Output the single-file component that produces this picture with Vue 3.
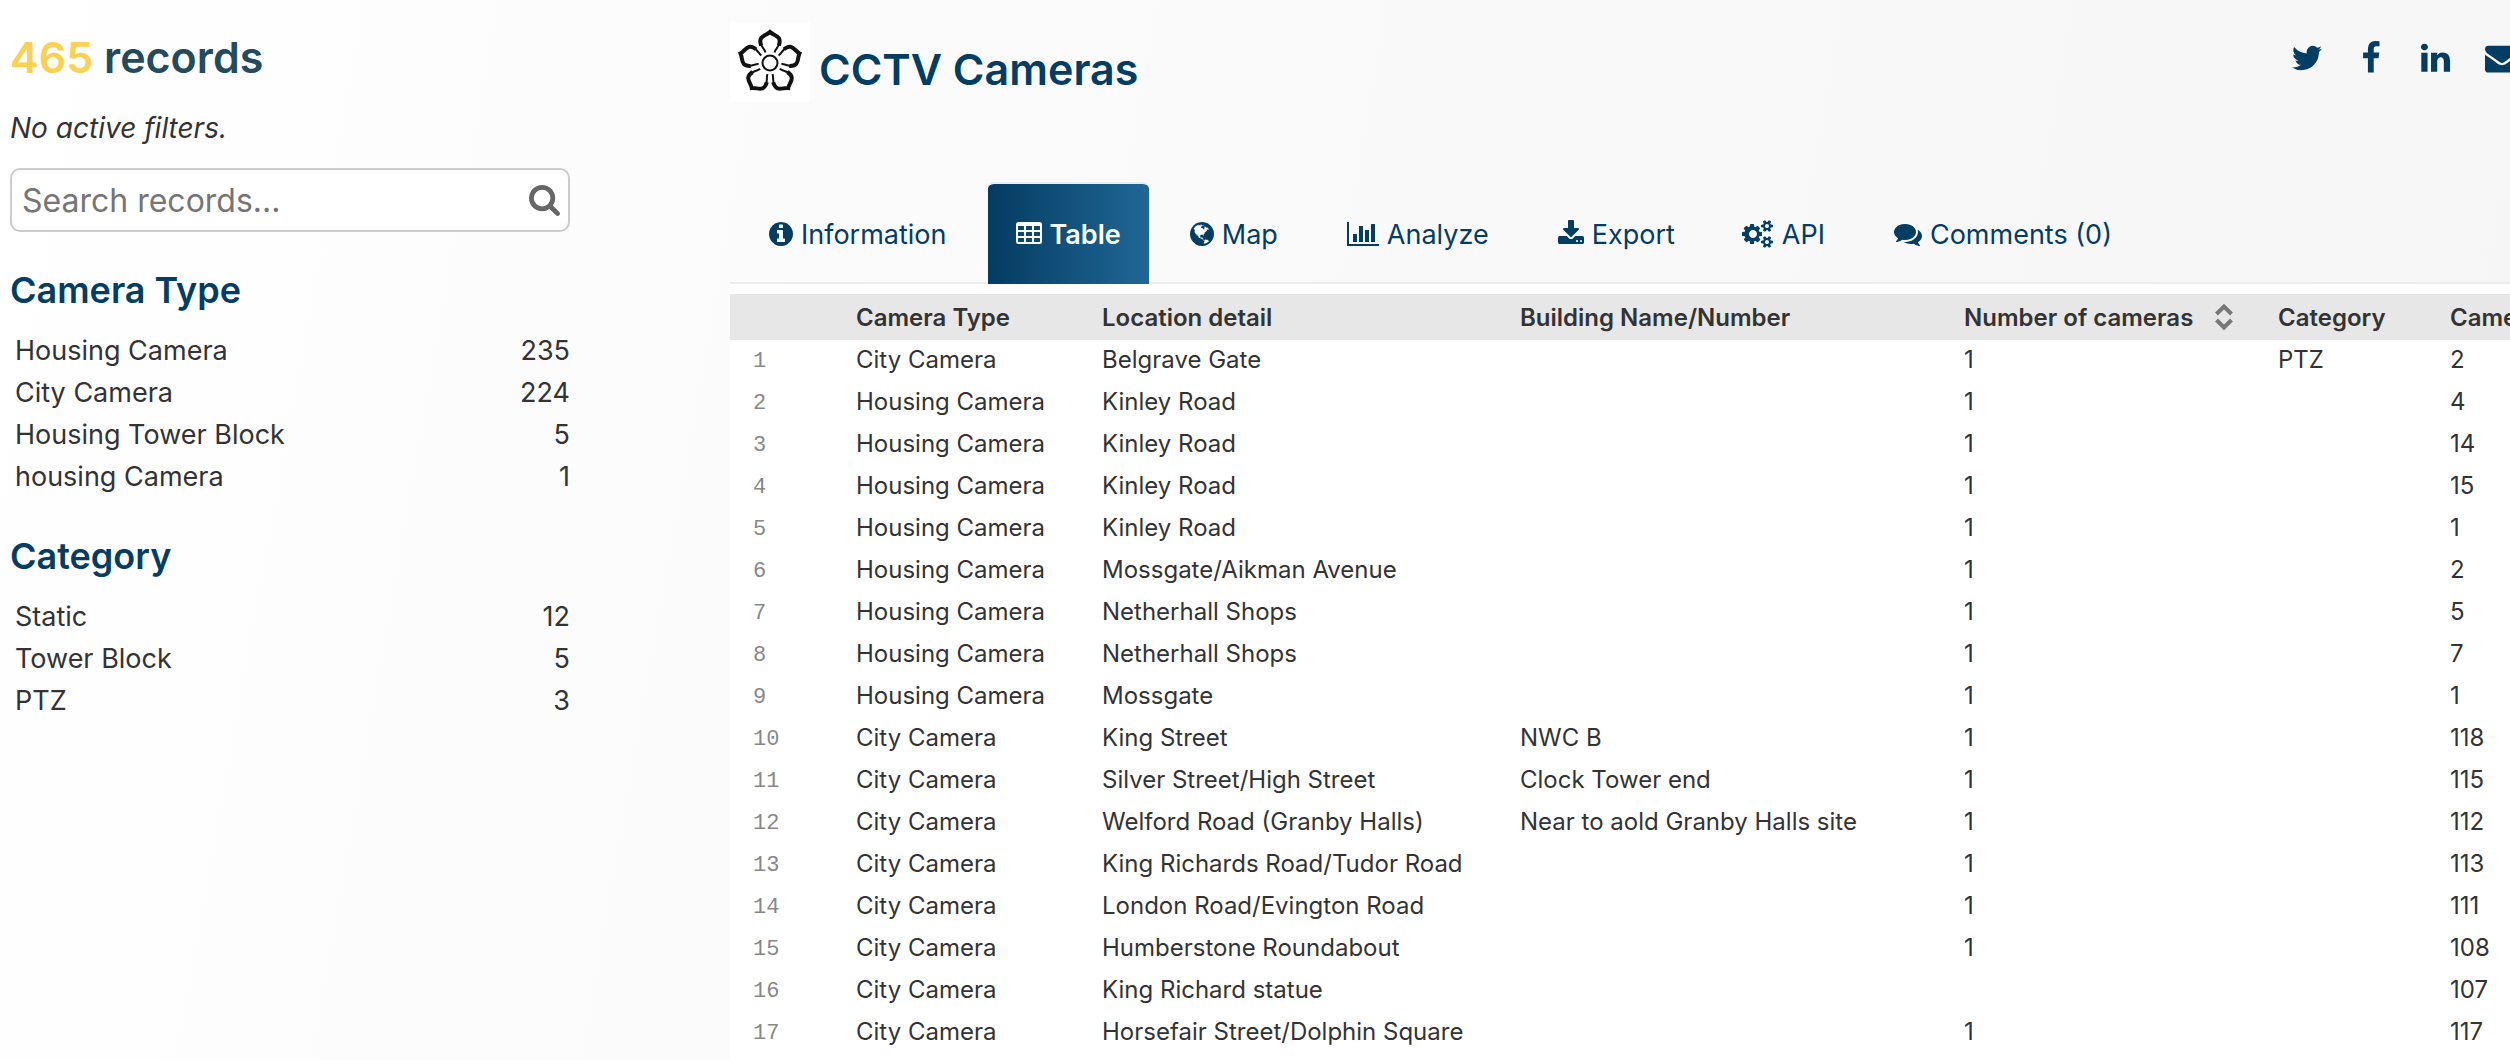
<template>
	<div class="page">
		<aside class="sidebar">
			<h2 class="count">
				<span class="count-number">465</span> records
			</h2>
			<p class="no-filters">
				No active filters.
			</p>
			<form class="search" @submit.prevent>
				<input v-model="query" class="search-input" type="text" placeholder="Search records..." aria-label="Search records">
				<button class="search-button" type="submit" aria-label="Search">
					<svg class="search-icon" viewBox="64 128 1664 1664"><path :d="icons.search" /></svg>
				</button>
			</form>
			<section v-for="facet in facets" :key="facet.name" class="facet">
				<h3 class="facet-title">
					{{ facet.name }}
				</h3>
				<ul class="facet-list">
					<li v-for="value in facet.values" :key="value.label">
						<a class="facet-value" href="#">
							<span>{{ value.label }}</span>
							<span>{{ value.count }}</span>
						</a>
					</li>
				</ul>
			</section>
		</aside>

		<main class="main">
			<header class="header">
				<svg class="logo" viewBox="-40 -41 80 80">
					<g v-for="angle in [0, 72, 144, 216, 288]" :key="angle" :transform="`rotate(${angle})`">
						<path class="petal" d="M-4.5 -10.5C-5.5 -14.5 -10 -17 -10 -22C-9.5 -27 -4 -27.5 0 -31.5C4 -27.5 9.5 -27 10 -22C10 -17 5.5 -14.5 4.5 -10.5" />
						<path class="petal-edge" d="M-8.8 -17.5C-12.5 -27.5 -4 -27 0 -31C4 -27 12.5 -27.5 8.8 -17.5" />
					</g>
					<circle class="petal-centre" r="7.5" />
				</svg>
				<h1 class="title">
					CCTV Cameras
				</h1>
				<div class="share">
					<a v-for="link in shareLinks" :key="link.label" href="#" :class="['share-link', link.icon]" :aria-label="link.label">
						<svg class="share-icon" :viewBox="link.viewBox"><path :d="icons[link.icon]" /></svg>
					</a>
				</div>
			</header>

			<nav class="tabs">
				<a
					v-for="tab in tabs"
					:key="tab.label"
					href="#"
					:class="['tab', { active: tab.label === activeTab }]"
					@click.prevent="activeTab = tab.label"
				>
					<svg class="tab-icon" :viewBox="tab.viewBox"><path :d="icons[tab.icon]" fill-rule="evenodd" /></svg>
					{{ tab.label }}
				</a>
			</nav>

			<div class="table-wrap">
				<table class="records">
					<colgroup>
						<col class="col-index">
						<col class="col-type">
						<col class="col-location">
						<col class="col-building">
						<col class="col-count">
						<col class="col-category">
						<col class="col-number">
					</colgroup>
					<thead>
						<tr>
							<th aria-label="Row" />
							<th>Camera Type</th>
							<th>Location detail</th>
							<th>Building Name/Number</th>
							<th>
								<button class="sort" type="button">
									Number of cameras
									<svg class="sort-icon" viewBox="0 0 18 26"><path d="M1.5 10L9 2.5L16.5 10M1.5 16L9 23.5L16.5 16" /></svg>
								</button>
							</th>
							<th>Category</th>
							<th>Camera Number</th>
						</tr>
					</thead>
					<tbody>
						<tr v-for="(row, i) in rows" :key="i">
							<td class="index">
								{{ i + 1 }}
							</td>
							<td v-for="(cell, j) in row" :key="j">
								{{ cell }}
							</td>
						</tr>
					</tbody>
				</table>
			</div>
		</main>
	</div>
</template>

<script setup>
import { ref } from 'vue';

const query = ref('');
const activeTab = ref('Table');

const facets = [
	{
		name: 'Camera Type',
		values: [
			{ label: 'Housing Camera', count: 235 },
			{ label: 'City Camera', count: 224 },
			{ label: 'Housing Tower Block', count: 5 },
			{ label: 'housing Camera', count: 1 },
		],
	},
	{
		name: 'Category',
		values: [
			{ label: 'Static', count: 12 },
			{ label: 'Tower Block', count: 5 },
			{ label: 'PTZ', count: 3 },
		],
	},
];

const shareLinks = [
	{ label: 'Twitter', icon: 'twitter', viewBox: '64 0 1664 1792' },
	{ label: 'Facebook', icon: 'facebook', viewBox: '384 0 1024 1792' },
	{ label: 'LinkedIn', icon: 'linkedin', viewBox: '26 0 1476 1792' },
	{ label: 'Email', icon: 'envelope', viewBox: '0 0 1792 1792' },
];

const tabs = [
	{ label: 'Information', icon: 'info', viewBox: '128 0 1536 1792' },
	{ label: 'Table', icon: 'table', viewBox: '64 0 1664 1792' },
	{ label: 'Map', icon: 'globe', viewBox: '128 0 1536 1792' },
	{ label: 'Analyze', icon: 'chart', viewBox: '0 0 2048 1792' },
	{ label: 'Export', icon: 'download', viewBox: '64 0 1664 1792' },
	{ label: 'API', icon: 'cogs', viewBox: '0 0 1920 1792' },
	{ label: 'Comments (0)', icon: 'comments', viewBox: '0 0 1792 1792' },
];

const rows = [
	['City Camera', 'Belgrave Gate', '', '1', 'PTZ', '2'],
	['Housing Camera', 'Kinley Road', '', '1', '', '4'],
	['Housing Camera', 'Kinley Road', '', '1', '', '14'],
	['Housing Camera', 'Kinley Road', '', '1', '', '15'],
	['Housing Camera', 'Kinley Road', '', '1', '', '1'],
	['Housing Camera', 'Mossgate/Aikman Avenue', '', '1', '', '2'],
	['Housing Camera', 'Netherhall Shops', '', '1', '', '5'],
	['Housing Camera', 'Netherhall Shops', '', '1', '', '7'],
	['Housing Camera', 'Mossgate', '', '1', '', '1'],
	['City Camera', 'King Street', 'NWC B', '1', '', '118'],
	['City Camera', 'Silver Street/High Street', 'Clock Tower end', '1', '', '115'],
	['City Camera', 'Welford Road (Granby Halls)', 'Near to aold Granby Halls site', '1', '', '112'],
	['City Camera', 'King Richards Road/Tudor Road', '', '1', '', '113'],
	['City Camera', 'London Road/Evington Road', '', '1', '', '111'],
	['City Camera', 'Humberstone Roundabout', '', '1', '', '108'],
	['City Camera', 'King Richard statue', '', '', '', '107'],
	['City Camera', 'Horsefair Street/Dolphin Square', '', '1', '', '117'],
];

const icons = {
	search: 'M1216 832q0-185-131.5-316.5t-316.5-131.5-316.5 131.5-131.5 316.5 131.5 316.5 316.5 131.5 316.5-131.5 131.5-316.5zm512 832q0 52-38 90t-90 38q-54 0-90-38l-343-342q-179 124-399 124-143 0-273.5-55.5t-225-150-150-225-55.5-273.5 55.5-273.5 150-225 225-150 273.5-55.5 273.5 55.5 225 150 150 225 55.5 273.5q0 220-124 399l343 343q37 37 37 90z',
	twitter: 'M1684 408q-67 98-162 167 1 14 1 42 0 130-38 259.5t-115.5 248.5-184.5 210.5-258 146-323 54.5q-271 0-496-145 35 4 78 4 225 0 401-138-105-2-188-64.5t-114-159.5q33 5 61 5 43 0 85-11-112-23-185.5-111.5t-73.5-205.5v-4q68 38 146 41-66-44-105-115t-39-154q0-88 44-163 121 149 294.5 238.5t371.5 99.5q-8-38-8-74 0-134 94.5-228.5t228.5-94.5q140 0 236 102 109-21 205-78-37 115-142 178 93-10 186-50z',
	facebook: 'M1343 12v264h-157q-86 0-116 36t-30 108v189h293l-39 296h-254v759h-306v-759h-255v-296h255v-218q0-186 104-288.5t277-102.5q147 0 228 12z',
	linkedin: 'M477 625v991h-330v-991h330zm21-306q1 73-50.5 122t-135.5 49h-2q-82 0-132-49t-50-122q0-74 51.5-122.5t134.5-48.5 133 48.5 51 122.5zm1166 729v568h-329v-530q0-105-40.5-164.5t-126.5-59.5q-63 0-105.5 34.5t-63.5 85.5q-11 30-11 81v553h-329q2-399 2-647t-1-296l-1-48h329v144h-2q20-32 41-56t56.5-52 87-43.5 114.5-15.5q171 0 275 113.5t104 332.5z',
	envelope: 'M1792 710v794q0 66-47 113t-113 47h-1472q-66 0-113-47t-47-113v-794q44 49 101 87 362 246 497 345 57 42 92.5 65.5t94.5 48 110 24.5h2q51 0 110-24.5t94.5-48 92.5-65.5q170-123 498-345 57-39 100-87zm0-294q0 79-49 151t-122 123q-376 261-468 325-10 7-42.5 31t-54 38.5-52 32.5-57.5 27-50 9h-2q-23 0-50-9t-57.5-27-52-32.5-54-38.5-42.5-31q-91-64-262-182.5t-205-142.5q-62-42-117-115.5t-55-136.5q0-78 41.5-130t118.5-52h1472q65 0 112.5 47t47.5 113z',
	info: 'M1152 1376v-160q0-14-9-23t-23-9h-96v-512q0-14-9-23t-23-9h-320q-14 0-23 9t-9 23v160q0 14 9 23t23 9h96v320h-96q-14 0-23 9t-9 23v160q0 14 9 23t23 9h448q14 0 23-9t9-23zm-128-896v-160q0-14-9-23t-23-9h-192q-14 0-23 9t-9 23v160q0 14 9 23t23 9h192q14 0 23-9t9-23zm640 416q0 209-103 385.5t-279.5 279.5-385.5 103-385.5-103-279.5-279.5-103-385.5 103-385.5 279.5-279.5 385.5-103 385.5 103 279.5 279.5 103 385.5z',
	table: 'M224 128h1344a160 160 0 0 1 160 160v1088a160 160 0 0 1-160 160h-1344a160 160 0 0 1-160-160v-1088a160 160 0 0 1 160-160zM224 384h320q32 0 32 32v192q0 32-32 32h-320q-32 0-32-32v-192q0-32 32-32zm0 384h320q32 0 32 32v192q0 32-32 32h-320q-32 0-32-32v-192q0-32 32-32zm0 384h320q32 0 32 32v192q0 32-32 32h-320q-32 0-32-32v-192q0-32 32-32zM736 384h320q32 0 32 32v192q0 32-32 32h-320q-32 0-32-32v-192q0-32 32-32zm0 384h320q32 0 32 32v192q0 32-32 32h-320q-32 0-32-32v-192q0-32 32-32zm0 384h320q32 0 32 32v192q0 32-32 32h-320q-32 0-32-32v-192q0-32 32-32zM1248 384h320q32 0 32 32v192q0 32-32 32h-320q-32 0-32-32v-192q0-32 32-32zm0 384h320q32 0 32 32v192q0 32-32 32h-320q-32 0-32-32v-192q0-32 32-32zm0 384h320q32 0 32 32v192q0 32-32 32h-320q-32 0-32-32v-192q0-32 32-32z',
	globe: 'M896 128q209 0 385.5 103t279.5 279.5 103 385.5-103 385.5-279.5 279.5-385.5 103-385.5-103-279.5-279.5-103-385.5 103-385.5 279.5-279.5 385.5-103zm274 521q-2 1-9.5 9.5t-13.5 9.5q2 0 4.5-5t5-11 3.5-7q6-7 22-15 14-6 52-12 34-8 51 11-2-2 9.5-13t14.5-12q3-2 15-4.5t15-7.5l2-22q-12 1-17.5-7t-6.5-21q0 2-6 8 0-7-4.5-8t-11.5 1-9 1q-10-3-15-7.5t-8-16.5-4-15q-2-5-9.5-10.5t-9.5-10.5q-1-2-2.5-5.5t-3-6.5-4-5.5-5.5-2.5-7 5-7.5 10-4.5 5q-3-2-6-1.5t-4.5 1-4.5 3-5 3.5q-3 2-8.5 3t-8.5 2q15-5-1-11-10-4-16-3 9-4 7.5-12t-8.5-14h5q-1-4-8.5-8.5t-17.5-8.5-13-6q-8-5-34-9.5t-33-.5q-5 6-4.5 10.5t4 14 3.5 12.5q1 6-5.5 13t-6.5 12q0 7 14 15.5t10 21.5q-3 8-16 16t-16 12q-5 8-1.5 18.5t10.5 16.5q2 2 1.5 4t-3.5 4.5-5.5 4-6.5 3.5l-3 2q-11 5-20.5-6t-13.5-26q-7-25-16-30-23-8-29 1-5-13-41-26-25-9-58-4 6-1 0-15-7-15-19-12 3-6 4-17.5t1-13.5q3-13 12-23 1-1 7-8.5t9.5-13.5.5-6q35 4 50-11 5-5 11.5-17t10.5-17q9-6 14-5.5t14.5 5.5 14.5 5q14 1 15.5-11t-7.5-20q12 1 3-17-4-7-8-9-12-4-27 5-8 4 2 8-1-1-9.5 10.5t-16.5 17.5-16-5q-1-1-5.5-13.5t-9.5-13.5q-8 0-16 15 3-8-11-15t-24-8q19-12-8-27-7-4-20.5-5t-19.5 4q-5 7-5.5 11.5t5 8 10.5 5.5 11.5 4 8.5 3q14 10 8 14-2 1-8.5 3.5t-11.5 4.5-6 4q-3 4 0 14t-2 14q-5-5-9-17.5t-7-16.5q7 9-25 6l-10-1q-4 0-16 2t-20.5 1-13.5-8q-4-8 0-20 1-4 4-2-4-3-11-9.5t-10-8.5q-46 15-94 41 6 1 12-1 5-2 13-6.5t10-5.5q34-14 42-7l5-5q14 16 20 25-7-4-30-1-20 6-22 12 7 12 5 18-4-3-11.5-10t-14.5-11-15-5q-16 0-22 1-146 80-235 222 7 7 12 8 4 1 5 9t2.5 11 11.5-3q9 8 3 19 1-1 44 27 19 17 21 21 3 11-10 18-1-2-9-9t-9-4q-3 5 .5 18.5t10.5 12.5q-7 0-9.5 16t-2.5 35.5-1 23.5l2 1q-3 12 5.5 34.5t21.5 19.5q-13 3 20 43 6 8 8 9 3 2 12 7.5t15 10 10 10.5q4 5 10 22.5t14 23.5q-2 6 9.5 20t10.5 23q-1 0-2.5 1t-2.5 1q3 7 15.5 14t15.5 13q1 3 2 10t3 11 8 2q2-20-24-62-15-25-17-29-3-5-5.5-15.5t-4.5-14.5q2 0 6 1.5t8.5 3.5 7.5 4 2 3q-3 7 2 17.5t12 18.5 17 19 12 13q6 6 14 19.5t0 13.5q9 0 20 10.5t17 19.5q5 8 8 26t5 24q2 7 8.5 13.5t12.5 9.5l16 8 13 7q5 2 18.5 10.5t21.5 11.5q10 4 16 4t14.5-2.5 13.5-3.5q15-2 29 15t21 21q36 19 55 11-2 1 .5 7.5t8 15.5 9 14.5 5.5 8.5q5 6 18 15t18 15q6-4 7-9-3 8 7 20t18 10q14-3 14-32-31 15-49-18 0-1-2.5-5.5t-4-8.5-2.5-8.5 0-7.5 5-3q9 0 10-3.5t-2-12.5-4-13q-1-8-11-20t-12-15q-5 9-16 8t-16-9q0 1-1.5 5.5t-1.5 6.5q-13 0-15-1 1-3 2.5-17.5t3.5-22.5q1-4 5.5-12t7.5-14.5 4-12.5-4.5-9.5-17.5-2.5q-19 1-26 20-1 3-3 10.5t-5 11.5-9 7q-7 3-24 2t-24-5q-13-8-22.5-29t-9.5-37q0-10 2.5-26.5t3-25-5.5-24.5q3-2 9-9.5t10-10.5q2-1 4.5-1.5t4.5 0 4-1.5 3-6q-1-1-4-3-3-3-4-3 7 3 28.5-1.5t27.5 1.5q15 11 22-2 0-1-2.5-9.5t-.5-13.5q5 27 29 9 3 3 15.5 5t17.5 5q3 2 7 5.5t5.5 4.5 5-.5 8.5-6.5q10 14 12 24 11 40 19 44 7 3 11 2t4.5-9.5 0-14-1.5-12.5l-1-8v-18l-1-8q-15-3-18.5-12t1.5-18.5 15-18.5q1-1 8-3.5t15.5-6.5 12.5-8q21-19 15-35 7 0 11-9-1 0-5-3t-7.5-5-4.5-2q9-5 2-16 5-3 7.5-11t7.5-10q9 12 21 2 8-8 1-16 5-7 20.5-10.5t18.5-9.5q7 2 8-2t1-12 3-12q4-5 15-9t13-5l17-11q3-4 0-4 18 2 31-11 10-11-6-20 3-6-3-9.5t-15-5.5q3-1 11.5-.5t10.5-1.5q15-10-7-16-17-5-43 12zm-163 877q206-36 351-189-3-3-12.5-4.5t-12.5-3.5q-18-7-24-8 1-7-2.5-13t-8-9-12.5-8-11-7q-2-2-7-6t-7-5.5-7.5-4.5-8.5-2-10 1l-3 1q-3 1-5.5 2.5t-5.5 3-4 3 0 2.5q-21-17-36-22-5-1-11-5.5t-10.5-7-10-1.5-11.5 7q-5 5-6 15t-2 13q-7-5 0-17.5t2-18.5q-3-6-10.5-4.5t-12 4.5-11.5 8.5-9 6.5-8.5 5.5-8.5 7.5q-3 4-6 12t-5 11q-2-4-11.5-6.5t-9.5-5.5q2 10 4 35t5 38q7 31-12 48-27 25-29 40-4 22 12 26 0 7-8 20.5t-7 21.5q0 6 2 16z',
	chart: 'M640 896v512h-256v-512h256zm384-512v1024h-256v-1024h256zm1024 1152v128h-2048v-1536h128v1408h1920zm-640-896v768h-256v-768h256zm384-384v1152h-256v-1152h256z',
	download: 'M1344 1344q0-26-19-45t-45-19-45 19-19 45 19 45 45 19 45-19 19-45zm256 0q0-26-19-45t-45-19-45 19-19 45 19 45 45 19 45-19 19-45zm128-224v320q0 40-28 68t-68 28h-1472q-40 0-68-28t-28-68v-320q0-40 28-68t68-28h465l135 136q58 56 136 56t136-56l136-136h464q40 0 68 28t28 68zm-325-569q17 41-14 70l-448 448q-18 19-45 19t-45-19l-448-448q-31-29-14-70 17-39 59-39h256v-448q0-26 19-45t45-19h256q26 0 45 19t19 45v448h256q42 0 59 39z',
	cogs: 'M832 896q0-106-75-181t-181-75-181 75-75 181 75 181 181 75 181-75 75-181zm768 512q0-52-38-90t-90-38-90 38-38 90q0 53 37.5 90.5t90.5 37.5 90.5-37.5 37.5-90.5zm0-1024q0-52-38-90t-90-38-90 38-38 90q0 53 37.5 90.5t90.5 37.5 90.5-37.5 37.5-90.5zm-448 421v185q0 10-7 19.5t-16 10.5l-155 24q-11 35-32 76 34 48 90 115 7 11 7 20 0 12-7 19-23 30-82.5 89.5t-78.5 59.5q-11 0-21-7l-115-90q-37 19-77 31-11 108-23 155-7 24-30 24h-186q-11 0-20-7.5t-10-17.5l-23-153q-34-10-75-31l-118 89q-7 7-20 7-11 0-21-8-144-133-144-160 0-9 7-19 10-14 41-53t47-61q-23-44-35-82l-152-24q-10-1-17-9.5t-7-19.5v-185q0-10 7-19.5t16-10.5l155-24q11-35 32-76-34-48-90-115-7-11-7-20 0-12 7-20 22-30 82-89t79-59q11 0 21 7l115 90q34-18 77-32 11-108 23-154 7-24 30-24h186q11 0 20 7.5t10 17.5l23 153q34 10 75 31l118-89q8-7 20-7 11 0 21 8 144 133 144 160 0 8-7 19-12 16-42 54t-45 60q23 48 34 82l152 23q10 2 17 10.5t7 19.5zm704 533v140q0 16-149 31-12 27-30 52 51 113 51 138 0 4-4 7-122 71-124 71-8 0-46-47t-52-68q-20 2-30 2t-30-2q-14 21-52 68t-46 47q-2 0-124-71-4-3-4-7 0-25 51-138-18-25-30-52-149-15-149-31v-140q0-16 149-31 13-29 30-52-51-113-51-138 0-4 4-7 4-2 35-20t59-34 30-16q8 0 46 46.5t52 67.5q20-2 30-2t30 2q51-71 92-112l6-2q4 0 124 70 4 3 4 7 0 25-51 138 17 23 30 52 149 15 149 31zm0-1024v140q0 16-149 31-12 27-30 52 51 113 51 138 0 4-4 7-122 71-124 71-8 0-46-47t-52-68q-20 2-30 2t-30-2q-14 21-52 68t-46 47q-2 0-124-71-4-3-4-7 0-25 51-138-18-25-30-52-149-15-149-31v-140q0-16 149-31 13-29 30-52-51-113-51-138 0-4 4-7 4-2 35-20t59-34 30-16q8 0 46 46.5t52 67.5q20-2 30-2t30 2q51-71 92-112l6-2q4 0 124 70 4 3 4 7 0 25-51 138 17 23 30 52 149 15 149 31z',
	comments: 'M1408 768q0 139-94 257t-256.5 186.5-353.5 68.5q-86 0-176-16-124 88-278 128-36 9-86 16h-3q-11 0-20.5-8t-11.5-21q-1-3-1-6.5t.5-6.5 2-6l2.5-5 3.5-5.5 4-5 4.5-5 4-4.5q5-6 23-25t26-29.5 22.5-29 25-38.5 20.5-44q-124-72-195-177t-71-224q0-139 94-257t256.5-186.5 353.5-68.5 353.5 68.5 256.5 186.5 94 257zm384 256q0 120-71 224.5t-195 176.5q10 24 20.5 44t25 38.5 22.5 29 26 29.5 23 25q1 1 4 4.5t4.5 5 4 5 3.5 5.5l2.5 5 2 6 .5 6.5-1 6.5q-3 14-13 22t-22 7q-50-7-86-16-154-40-278-128-90 16-176 16-271 0-472-132 58 4 88 4 161 0 309-45t264-129q125-92 192-212t67-254q0-77-23-152 129 71 204 178t75 230z',
};
</script>

<style>
body {
	margin: 0;
}
</style>

<style scoped>
.page {
	display: grid;
	grid-template-columns: 570px minmax(0, 1fr);
	column-gap: 150px;
	box-sizing: border-box;
	height: 100vh;
	padding-left: 10px;
	overflow: hidden;
	background: linear-gradient(100deg, #fff 0%, #fbfbfb 32%, #f6f6f6 100%);
	color: #333;
	font-family: Inter, "Liberation Sans", sans-serif;
	font-size: 27px;
}

h1,
h2,
h3,
p,
ul {
	margin: 0;
	padding: 0;
}

a {
	color: inherit;
	text-decoration: none;
}

svg {
	display: block;
	overflow: visible;
	fill: currentColor;
}

.sidebar {
	width: 560px;
	padding-top: 29px;
}

.count {
	color: #234b5b;
	font-size: 43px;
	font-weight: 600;
	line-height: 56px;
}

.count-number {
	color: #fdd04f;
}

.no-filters {
	margin-top: 25px;
	font-size: 28px;
	font-style: italic;
	line-height: 36px;
}

.search {
	display: flex;
	align-items: center;
	box-sizing: border-box;
	height: 64px;
	margin-top: 22px;
	padding: 0 8px 0 10px;
	border: 2px solid #ccc;
	border-radius: 10px;
	background: #fff;
}

.search-input {
	flex: 1;
	min-width: 0;
	padding: 0;
	border: 0;
	outline: 0;
	background: none;
	color: #333;
	font-family: inherit;
	font-size: 32px;
}

.search-input::placeholder {
	color: #757575;
	opacity: 1;
}

.search-button {
	padding: 0;
	border: 0;
	background: none;
	color: #666;
}

.search-icon {
	width: 31px;
	height: 31px;
}

.facet {
	margin-top: 34px;
}

.facet-title {
	margin-bottom: 16px;
	color: #023d63;
	font-size: 36px;
	font-weight: 600;
	line-height: 48px;
}

.facet-list {
	list-style: none;
}

.facet-value {
	display: flex;
	justify-content: space-between;
	padding-left: 5px;
	line-height: 42px;
}

.main {
	display: flex;
	flex-direction: column;
	min-width: 0;
	color: #023d63;
}

.header {
	display: flex;
	align-items: flex-start;
	height: 160px;
	padding-top: 22px;
}

.logo {
	width: 80px;
	height: 80px;
	background: #fff;
}

.petal,
.petal-edge,
.petal-centre {
	fill: none;
	stroke: #111;
	stroke-width: 2;
}

.petal-edge {
	stroke-width: 4;
}

.title {
	margin-left: 9px;
	padding-top: 19px;
	font-size: 43px;
	font-weight: 600;
	line-height: 56px;
}

.share {
	display: flex;
	gap: 38px;
	margin: 19px -9px 0 auto;
}

.share-icon {
	width: 34px;
	height: 34px;
}

.twitter .share-icon {
	width: 32px;
}

.facebook .share-icon {
	width: 20px;
}

.linkedin .share-icon {
	width: 28px;
}

.tabs {
	display: flex;
	gap: 13px;
	padding-left: 11px;
	border-bottom: 2px solid #ececec;
}

.tab {
	display: flex;
	align-items: center;
	gap: 8px;
	box-sizing: border-box;
	height: 102px;
	margin-bottom: -2px;
	padding: 0 28px;
	border-top: 2px solid transparent;
	white-space: nowrap;
}

.tab.active {
	border-top-color: #ececec;
	border-radius: 6px 6px 0 0;
	background: linear-gradient(to right, #043c61, #206796) padding-box;
	color: #fff;
	font-weight: 600;
}

.tab-icon {
	height: 28px;
}

.table-wrap {
	flex: 1;
	padding-top: 10px;
	overflow: hidden;
	background: #fff;
	color: #333;
}

.records {
	width: 1960px;
	table-layout: fixed;
	border-collapse: collapse;
	font-size: 24px;
	text-align: left;
	white-space: nowrap;
}

.col-index {
	width: 126px;
}

.col-type {
	width: 246px;
}

.col-location {
	width: 418px;
}

.col-building {
	width: 444px;
}

.col-count {
	width: 314px;
}

.col-category {
	width: 172px;
}

.records th {
	height: 46px;
	padding: 0;
	background: #e7e7e7;
	font-weight: 600;
}

.records td {
	height: 39px;
	padding: 0 0 3px;
	line-height: 39px;
}

.records .index {
	padding: 2px 0 1px 23px;
	color: #888;
	font-family: "Liberation Mono", monospace;
	font-size: 22px;
}

.sort {
	display: flex;
	align-items: center;
	gap: 22px;
	padding: 0;
	border: 0;
	background: none;
	color: inherit;
	font: inherit;
}

.sort-icon {
	width: 18px;
	height: 26px;
	fill: none;
	stroke: #777;
	stroke-width: 4;
}
</style>
